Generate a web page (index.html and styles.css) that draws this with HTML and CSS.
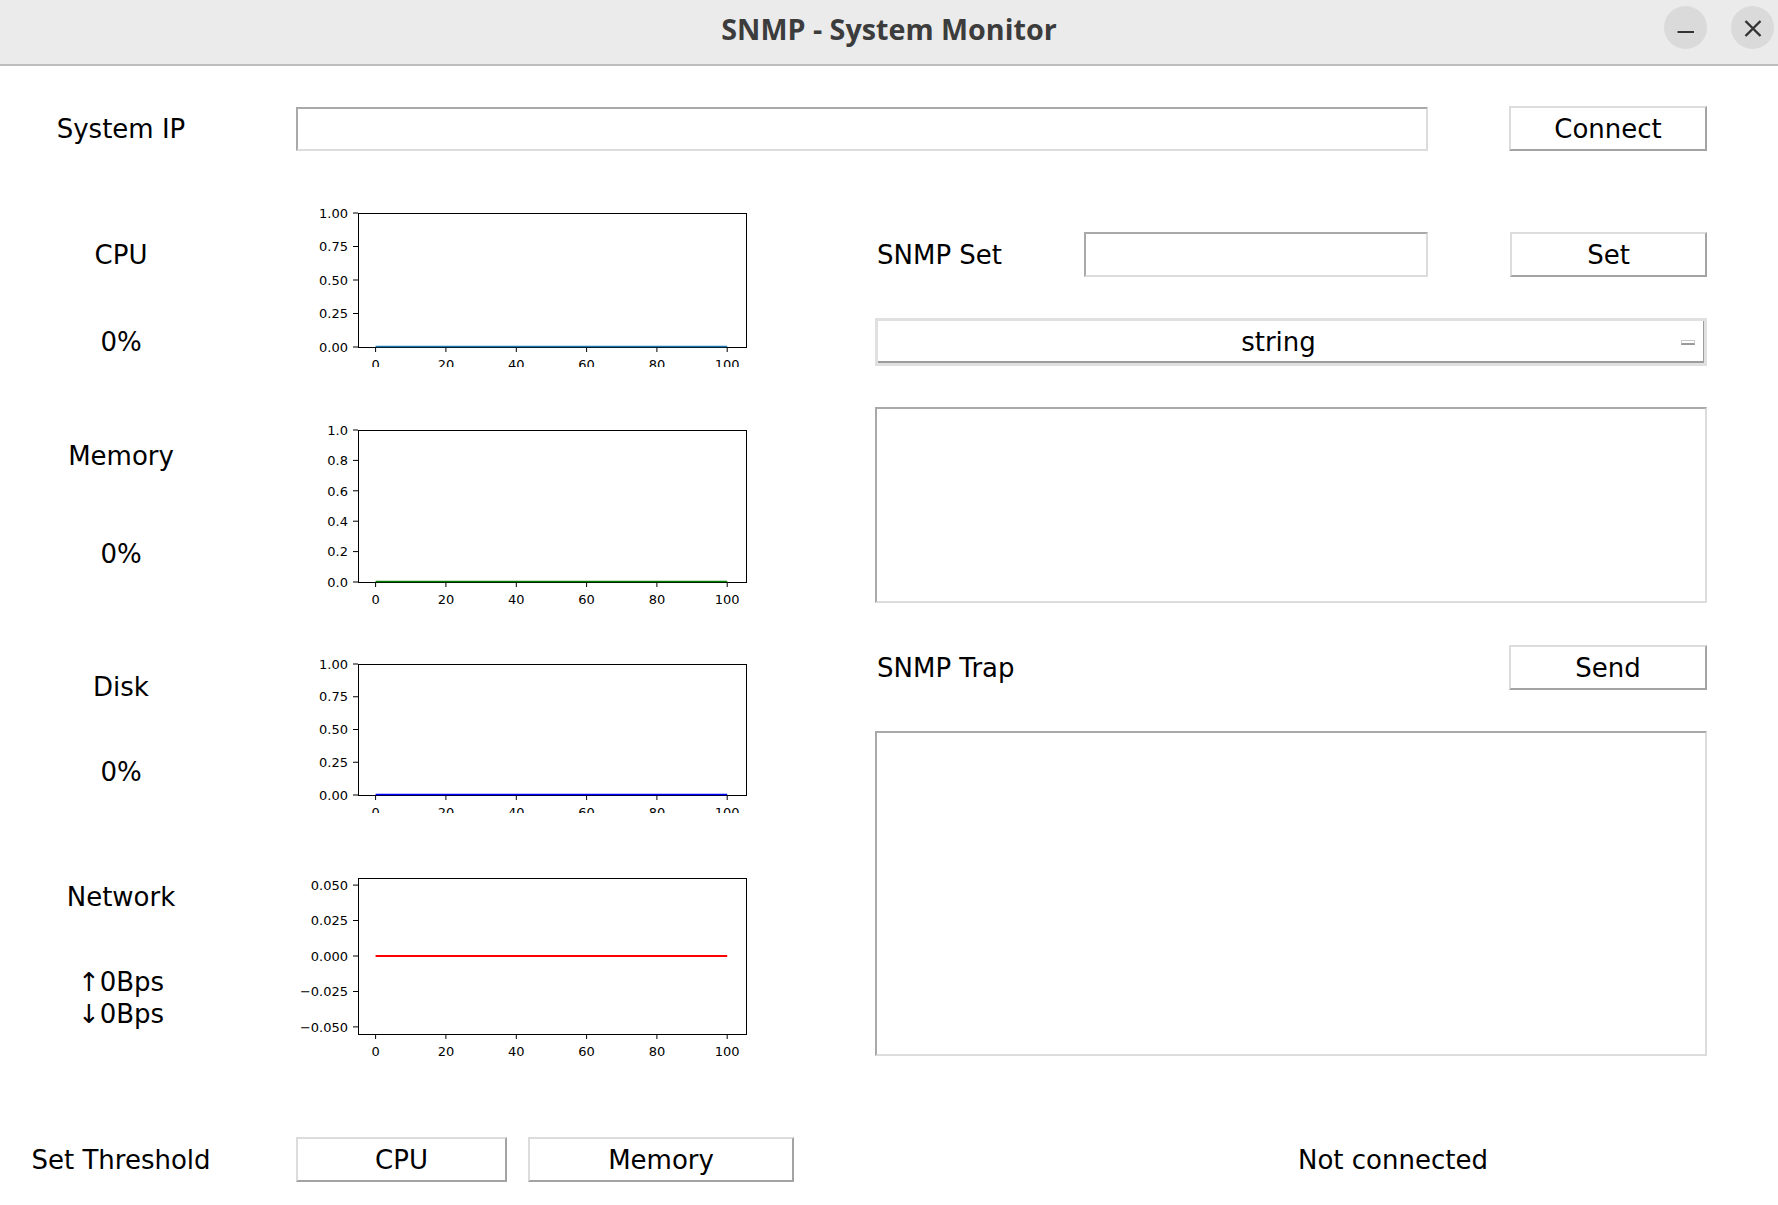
FILE: index.html
```html
<!DOCTYPE html>
<html>
<head>
<meta charset="utf-8">
<title>SNMP - System Monitor</title>
<link rel="stylesheet" href="styles.css">
</head>
<body>
<div class="titlebar">
  <div></div>
  <div class="title">SNMP - System Monitor</div>
  <div class="controls">
    <span class="wbtn"><svg width="43" height="43" viewBox="0 0 43 43"><line x1="13.5" y1="26" x2="30" y2="26" stroke="#333" stroke-width="2"/></svg></span>
    <span class="wbtn"><svg width="43" height="43" viewBox="0 0 43 43"><path d="M14.5 15 L29.5 30 M29.5 15 L14.5 30" stroke="#333" stroke-width="2.4" fill="none"/></svg></span>
  </div>
</div>

<div class="app">
  <div class="row-ip">
    <div class="lbl lbl-col">System IP</div>
    <div class="entry entry-ip"></div>
    <div class="btn btn-connect">Connect</div>
  </div>

  <div class="main">
    <div class="left">
      <div class="mrow mrow-cpu">
        <div class="lbls">
          <div class="lbl first">CPU</div>
          <div class="lbl second">0%</div>
        </div>
        <svg class="chart" width="460" height="171" viewBox="0 0 460 171">
          <g class="yt">
            <line x1="63" y1="17" x2="68" y2="17"/><line x1="63" y1="50.5" x2="68" y2="50.5"/><line x1="63" y1="84" x2="68" y2="84"/><line x1="63" y1="117.5" x2="68" y2="117.5"/><line x1="63" y1="151" x2="68" y2="151"/>
            <line x1="85.6" y1="151" x2="85.6" y2="156"/><line x1="155.9" y1="151" x2="155.9" y2="156"/><line x1="226.3" y1="151" x2="226.3" y2="156"/><line x1="296.6" y1="151" x2="296.6" y2="156"/><line x1="366.9" y1="151" x2="366.9" y2="156"/><line x1="437.2" y1="151" x2="437.2" y2="156"/>
          </g>
          <g class="ylab">
            <text x="58" y="21.7">1.00</text><text x="58" y="55.2">0.75</text><text x="58" y="88.7">0.50</text><text x="58" y="122.2">0.25</text><text x="58" y="155.7">0.00</text>
          </g>
          <g class="xlab">
            <text x="85.6" y="172.5">0</text><text x="155.9" y="172.5">20</text><text x="226.3" y="172.5">40</text><text x="296.6" y="172.5">60</text><text x="366.9" y="172.5">80</text><text x="437.2" y="172.5">100</text>
          </g>
          <rect class="spine" x="68.5" y="17.5" width="388" height="134"/>
          <line x1="85.6" y1="150.5" x2="437.2" y2="150.5" stroke="#1f77b4" stroke-width="1.6"/>
        </svg>
      </div>

      <div class="mrow mrow-mem">
        <div class="lbls">
          <div class="lbl first">Memory</div>
          <div class="lbl second">0%</div>
        </div>
        <svg class="chart" width="460" height="243" viewBox="0 0 460 243">
          <g class="yt">
            <line x1="63" y1="63" x2="68" y2="63"/><line x1="63" y1="93.4" x2="68" y2="93.4"/><line x1="63" y1="123.8" x2="68" y2="123.8"/><line x1="63" y1="154.2" x2="68" y2="154.2"/><line x1="63" y1="184.6" x2="68" y2="184.6"/><line x1="63" y1="215" x2="68" y2="215"/>
            <line x1="85.6" y1="215" x2="85.6" y2="220"/><line x1="155.9" y1="215" x2="155.9" y2="220"/><line x1="226.3" y1="215" x2="226.3" y2="220"/><line x1="296.6" y1="215" x2="296.6" y2="220"/><line x1="366.9" y1="215" x2="366.9" y2="220"/><line x1="437.2" y1="215" x2="437.2" y2="220"/>
          </g>
          <g class="ylab">
            <text x="58" y="67.7">1.0</text><text x="58" y="98.1">0.8</text><text x="58" y="128.5">0.6</text><text x="58" y="158.9">0.4</text><text x="58" y="189.3">0.2</text><text x="58" y="219.7">0.0</text>
          </g>
          <g class="xlab">
            <text x="85.6" y="236.5">0</text><text x="155.9" y="236.5">20</text><text x="226.3" y="236.5">40</text><text x="296.6" y="236.5">60</text><text x="366.9" y="236.5">80</text><text x="437.2" y="236.5">100</text>
          </g>
          <rect class="spine" x="68.5" y="63.5" width="388" height="152"/>
          <line x1="85.6" y1="214.5" x2="437.2" y2="214.5" stroke="#008000" stroke-width="1.6"/>
        </svg>
      </div>

      <div class="mrow mrow-disk">
        <div class="lbls">
          <div class="lbl first">Disk</div>
          <div class="lbl second">0%</div>
        </div>
        <svg class="chart" width="460" height="203" viewBox="0 0 460 203">
          <g class="yt">
            <line x1="63" y1="54" x2="68" y2="54"/><line x1="63" y1="86.75" x2="68" y2="86.75"/><line x1="63" y1="119.5" x2="68" y2="119.5"/><line x1="63" y1="152.25" x2="68" y2="152.25"/><line x1="63" y1="185" x2="68" y2="185"/>
            <line x1="85.6" y1="185" x2="85.6" y2="190"/><line x1="155.9" y1="185" x2="155.9" y2="190"/><line x1="226.3" y1="185" x2="226.3" y2="190"/><line x1="296.6" y1="185" x2="296.6" y2="190"/><line x1="366.9" y1="185" x2="366.9" y2="190"/><line x1="437.2" y1="185" x2="437.2" y2="190"/>
          </g>
          <g class="ylab">
            <text x="58" y="58.7">1.00</text><text x="58" y="91.45">0.75</text><text x="58" y="124.2">0.50</text><text x="58" y="156.95">0.25</text><text x="58" y="189.7">0.00</text>
          </g>
          <g class="xlab">
            <text x="85.6" y="206.5">0</text><text x="155.9" y="206.5">20</text><text x="226.3" y="206.5">40</text><text x="296.6" y="206.5">60</text><text x="366.9" y="206.5">80</text><text x="437.2" y="206.5">100</text>
          </g>
          <rect class="spine" x="68.5" y="54.5" width="388" height="131"/>
          <line x1="85.6" y1="184.5" x2="437.2" y2="184.5" stroke="#0000ff" stroke-width="1.6"/>
        </svg>
      </div>

      <div class="mrow mrow-net">
        <div class="lbls">
          <div class="lbl first">Network</div>
          <div class="lbl second">↑0Bps</div>
          <div class="lbl">↓0Bps</div>
        </div>
        <svg class="chart" width="460" height="257" viewBox="0 0 460 257">
          <g class="yt">
            <line x1="63" y1="72.1" x2="68" y2="72.1"/><line x1="63" y1="107.5" x2="68" y2="107.5"/><line x1="63" y1="143" x2="68" y2="143"/><line x1="63" y1="178.5" x2="68" y2="178.5"/><line x1="63" y1="213.9" x2="68" y2="213.9"/>
            <line x1="85.6" y1="221" x2="85.6" y2="226"/><line x1="155.9" y1="221" x2="155.9" y2="226"/><line x1="226.3" y1="221" x2="226.3" y2="226"/><line x1="296.6" y1="221" x2="296.6" y2="226"/><line x1="366.9" y1="221" x2="366.9" y2="226"/><line x1="437.2" y1="221" x2="437.2" y2="226"/>
          </g>
          <g class="ylab">
            <text x="58" y="76.8">0.050</text><text x="58" y="112.2">0.025</text><text x="58" y="147.7">0.000</text><text x="58" y="183.2">−0.025</text><text x="58" y="218.6">−0.050</text>
          </g>
          <g class="xlab">
            <text x="85.6" y="242.5">0</text><text x="155.9" y="242.5">20</text><text x="226.3" y="242.5">40</text><text x="296.6" y="242.5">60</text><text x="366.9" y="242.5">80</text><text x="437.2" y="242.5">100</text>
          </g>
          <rect class="spine" x="68.5" y="65.5" width="388" height="156"/>
          <line x1="85.6" y1="143" x2="437.2" y2="143" stroke="#ff0000" stroke-width="1.8"/>
        </svg>
      </div>
    </div>

    <div class="right">
      <div class="set-row">
        <div class="lbl set-lbl">SNMP Set</div>
        <div class="entry entry-set"></div>
        <div class="btn btn-set">Set</div>
      </div>
      <div class="combo">
        <span class="combo-text">string</span>
        <span class="combo-ind"></span>
      </div>
      <div class="textbox tb-set"></div>
      <div class="trap-row">
        <div class="lbl trap-lbl">SNMP Trap</div>
        <div class="btn btn-send">Send</div>
      </div>
      <div class="textbox tb-trap"></div>
    </div>
  </div>

  <div class="bottom">
    <div class="lbl lbl-col">Set Threshold</div>
    <div class="btn btn-cpu">CPU</div>
    <div class="btn btn-mem">Memory</div>
    <div class="lbl status">Not connected</div>
  </div>
</div>
</body>
</html>
```

FILE: styles.css
```css
html, body {
  margin: 0;
  padding: 0;
}
body {
  width: 1778px;
  height: 1205px;
  overflow: hidden;
  background: #ffffff;
  color: #000000;
  font-family: "DejaVu Sans", sans-serif;
  font-size: 26px;
}

/* ---------- title bar ---------- */
.titlebar {
  height: 64px;
  border-bottom: 2px solid #bdbdbd;
  background: #ebebeb;
  display: grid;
  grid-template-columns: 1fr auto 1fr;
}
.title {
  font-family: "Open Sans", "DejaVu Sans", sans-serif;
  font-weight: 700;
  font-size: 28.7px;
  line-height: 58px;
  color: #3c3c3c;
  white-space: nowrap;
}
.controls {
  justify-self: end;
  display: flex;
  gap: 24px;
  padding: 6px 4px 0 0;
}
.wbtn {
  width: 43px;
  height: 43px;
  border-radius: 50%;
  background: #dadada;
  display: block;
}
.wbtn svg {
  display: block;
}

/* ---------- generic widgets ---------- */
.lbl {
  white-space: nowrap;
  line-height: 32px;
}
.lbl-col {
  width: 242px;
  text-align: center;
  line-height: 45px;
  padding-top: 2px;
}
.entry, .textbox {
  box-sizing: border-box;
  background: #ffffff;
  border-style: solid;
  border-width: 2px;
  border-color: #a9a9a9 #dcdcdc #dcdcdc #a9a9a9;
}
.btn {
  box-sizing: border-box;
  height: 45px;
  padding-top: 2px;
  background: #ffffff;
  border-style: solid;
  border-width: 2px;
  border-color: #dcdcdc #a3a3a3 #a3a3a3 #dcdcdc;
  text-align: center;
  line-height: 39px;
  white-space: nowrap;
}

/* ---------- IP row ---------- */
.row-ip {
  height: 130px;
  box-sizing: border-box;
  padding-top: 40px;
  display: flex;
  align-items: flex-start;
}
.row-ip .lbl-col {
  padding-top: 1px;
}
.entry-ip {
  margin-left: 54px;
  margin-top: 1px;
  width: 1132px;
  height: 44px;
}
.btn-connect {
  margin-left: 81px;
  width: 198px;
}

/* ---------- main area ---------- */
.main {
  display: flex;
  height: 874px;
}
.left {
  width: 875px;
  display: flex;
  flex-direction: column;
}
.mrow {
  display: flex;
  align-items: flex-start;
}
.lbls {
  width: 242px;
  padding-top: 1px;
  display: flex;
  flex-direction: column;
  align-items: center;
}
.chart {
  display: block;
  margin-left: 48px;
  overflow: hidden;
  font-family: "DejaVu Sans", sans-serif;
  font-size: 13px;
}
.chart .yt line {
  stroke: #000000;
  stroke-width: 1;
}
.chart .ylab text {
  text-anchor: end;
  fill: #000000;
}
.chart .xlab text {
  text-anchor: middle;
  fill: #000000;
}
.chart .spine {
  fill: none;
  stroke: #000000;
  stroke-width: 1;
}

.mrow-cpu { height: 171px; }
.mrow-cpu .first { margin-top: 42px; }
.mrow-cpu .second { margin-top: 55px; }

.mrow-mem { height: 243px; }
.mrow-mem .first { margin-top: 72px; }
.mrow-mem .second { margin-top: 66px; }

.mrow-disk { height: 203px; }
.mrow-disk .first { margin-top: 60px; }
.mrow-disk .second { margin-top: 53px; }

.mrow-net { height: 257px; }
.mrow-net .first { margin-top: 67px; }
.mrow-net .second { margin-top: 53px; }

/* ---------- right column ---------- */
.right {
  width: 832px;
  display: flex;
  flex-direction: column;
}
.set-row {
  margin-top: 36px;
  height: 45px;
  display: flex;
  align-items: center;
}
.set-lbl {
  width: 207px;
  padding-left: 2px;
  padding-top: 2px;
  line-height: 45px;
}
.entry-set {
  width: 344px;
  height: 45px;
}
.btn-set {
  margin-left: 82px;
  width: 197px;
}
.combo {
  margin-top: 41px;
  height: 48px;
  box-sizing: border-box;
  border: 3px solid #e0e0e0;
  box-shadow: inset -1px -2px 0 #9c9c9c;
  background: #ffffff;
  display: flex;
  align-items: center;
}
.combo-text {
  flex: 1;
  text-align: center;
  line-height: 40px;
}
.combo-ind {
  width: 14px;
  height: 5px;
  box-sizing: border-box;
  margin-left: 2px;
  margin-right: 9px;
  border: 1px solid #c8c8c8;
  border-bottom: 2px solid #9a9a9a;
  background: #ffffff;
}
.tb-set {
  margin-top: 41px;
  height: 196px;
}
.trap-row {
  margin-top: 42px;
  height: 45px;
  display: flex;
  align-items: center;
  justify-content: space-between;
}
.trap-lbl {
  padding-left: 2px;
  padding-top: 2px;
  line-height: 45px;
}
.btn-send {
  width: 198px;
}
.tb-trap {
  margin-top: 41px;
  height: 325px;
}

/* ---------- bottom row ---------- */
.bottom {
  display: flex;
  align-items: center;
  padding-top: 66px;
}
.btn-cpu {
  margin-left: 54px;
  width: 211px;
}
.btn-mem {
  margin-left: 21px;
  width: 266px;
}
.status {
  margin-left: 504px;
  padding-top: 2px;
  line-height: 45px;
}
```
